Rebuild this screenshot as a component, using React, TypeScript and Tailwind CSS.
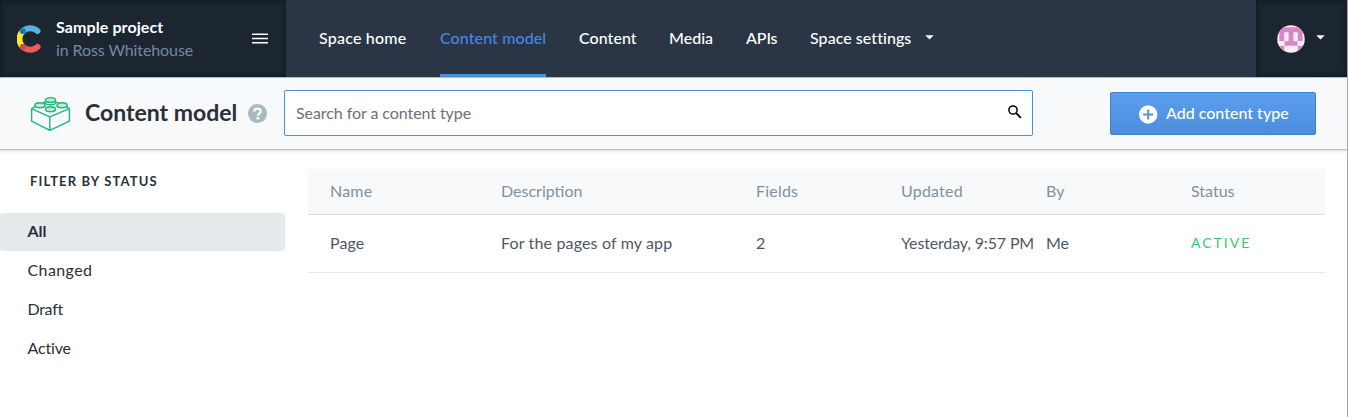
import React from "react";

const navItems = [
  { label: "Space home", width: "w-[88px]", spacing: "tracking-[0.22px]" },
  { label: "Content model", width: "w-[106px]", spacing: "tracking-[0.1px]", active: true },
  { label: "Content", width: "w-[57px]", spacing: "tracking-[0.05px]" },
  { label: "Media", width: "w-[44px]", spacing: "tracking-normal" },
  { label: "APIs", width: "w-[31px]", spacing: "tracking-[-0.1px]" },
  { label: "Space settings", width: "w-[102px]", spacing: "tracking-[0.05px]" },
];

const filters = [
  { label: "All", spacing: "tracking-normal" },
  { label: "Changed", spacing: "tracking-[0.4px]" },
  { label: "Draft", spacing: "tracking-[-0.3px]" },
  { label: "Active", spacing: "tracking-[-0.15px]" },
];

function Caret() {
  return (
    <svg width="9" height="5" viewBox="0 0 9 5" className="block shrink-0">
      <path d="M0.3 0.3h8.4L4.5 4.4z" fill="#fff" />
    </svg>
  );
}

function Logo() {
  return (
    <svg width="24" height="28" viewBox="0 0 24 28" fill="none" strokeWidth="5.8" strokeLinecap="round" className="shrink-0">
      <path d="M5.8 6.1A11 11 0 0 0 5.8 21.9" stroke="#fde432" />
      <path d="M5.8 6.1A11 11 0 0 1 20.6 6.1" stroke="#56b3e2" />
      <path d="M5.8 21.9A11 11 0 0 0 20.6 21.9" stroke="#ee5a5a" />
      <circle cx="5.8" cy="6.1" r="2.9" fill="#1279b3" />
      <circle cx="5.8" cy="21.9" r="2.9" fill="#ca4a36" />
    </svg>
  );
}

function Avatar() {
  return (
    <svg width="28" height="28" viewBox="0 0 28 28" className="shrink-0">
      <defs>
        <clipPath id="round">
          <circle cx="14" cy="14" r="13.7" />
        </clipPath>
      </defs>
      <g clipPath="url(#round)">
        <rect width="28" height="28" fill="#f0f0f0" />
        <path
          fill="#dc85c6"
          d="M2.3 2.3h23.4v14H20.7v4.4H25.7V28H20.7V20.7H7.3V28H2.3V20.7H7.3v-4.4H2.3z"
        />
        <path fill="#f0f0f0" d="M7.2 7.2h4.4v9H7.2zM16.4 7.2h4.4v9h-4.4z" />
        <path fill="#f0f0f0" d="M0 16.3h7.3v4.4H0zM20.7 16.3H28v4.4h-7.3z" />
      </g>
    </svg>
  );
}

function Brick() {
  return (
    <svg width="42" height="36" viewBox="0 0 42 36" fill="none" stroke="#20b77f" strokeWidth="1.4" strokeLinejoin="round" className="shrink-0">
      <path d="M1.6 12.6L19.8 20.8 39.4 12.6V25.2L19.8 34.3 1.6 25.2zM19.8 20.8v13.5" />
      <path d="M1.6 12.6l3.6-2M15 6.2l-2 .8M26 6.2l2.6 1.1M36.6 10.9l2.8 1.7" />
      <g fill="#b9ecd0">
        <path d="M15.5 4v2.6c0 1.4 2.3 2.2 5 2.2s5-.8 5-2.2V4" fill="#f7f9fa" />
        <ellipse cx="20.5" cy="4" rx="5" ry="2.4" />
        <path d="M4.9 9.2v1.4M15 9.2v1.4M27 9.2v1.4M37.1 9.2v1.4" />
        <ellipse cx="9.9" cy="9.2" rx="5" ry="2.5" />
        <ellipse cx="32.1" cy="9.2" rx="5" ry="2.5" />
        <ellipse cx="20.5" cy="13.3" rx="5" ry="2.5" />
      </g>
    </svg>
  );
}

export default function App() {
  return (
    <div className="h-[417px] w-[1348px] overflow-hidden border-r border-[#a3a6a8] bg-white font-['Lato',sans-serif] text-[16px] text-[#2a3039]">
      <header className="flex h-[78px] border-b border-[#b4c3ca] bg-[#2a3645] text-white">
        <div className="flex w-[286px] shrink-0 items-center bg-[#1b2631] pl-[17px] pr-[18px] shadow-[inset_0_0_5px_#0d141b]">
          <Logo />
          <div className="ml-[15px] flex-1 pb-[2px] leading-[23px]">
            <div className="font-bold tracking-[0.1px]">Sample project</div>
            <div className="tracking-[-0.1px] text-[#7688a6]">in Ross Whitehouse</div>
          </div>
          <svg width="16" height="11" viewBox="0 0 16 11" className="block">
            <path d="M0 1.2h16M0 5.5h16M0 9.8h16" stroke="#fff" strokeWidth="1.4" />
          </svg>
        </div>
        <nav className="flex flex-1 gap-[33px] pl-[33px]">
          {navItems.map((n) => (
            <a
              key={n.label}
              className={`flex items-center whitespace-nowrap border-b-[3px] pt-px font-medium ${n.width} ${n.spacing} ${
                n.active ? "border-b-[#4a90e2] text-[#4586e4]" : "border-b-transparent text-white"
              }`}
            >
              {n.label}
            </a>
          ))}
          <div className="-ml-[20px] flex items-center pb-[3px]">
            <Caret />
          </div>
        </nav>
        <div className="flex w-[91px] shrink-0 items-center gap-[11px] bg-[#1b2631] pl-[21px] shadow-[inset_0_0_5px_#0d141b]">
          <Avatar />
          <div className="pb-[3px]">
            <Caret />
          </div>
        </div>
      </header>

      <section className="flex h-[72px] items-center border-b border-[#b4c3ca] bg-[#f7f9fa] pl-[30px] pr-[31px] shadow-[0_1px_3px_rgba(0,0,0,0.16)]">
        <Brick />
        <h1 className="ml-[13px] w-[153px] whitespace-nowrap pb-[3px] text-[23px] font-bold leading-[28px]">Content model</h1>
        <svg width="19" height="19" viewBox="0 0 19 19" className="ml-[10px] shrink-0">
          <circle cx="9.5" cy="9.5" r="9.5" fill="#a9b9c0" />
          <path d="M6.3 7.6C6.3 5.7 7.7 4.6 9.5 4.6s3.2 1 3.2 2.7c0 2-2.8 2.2-2.8 4.5" fill="none" stroke="#fff" strokeWidth="2.4" />
          <rect x="8.5" y="13" width="2.7" height="2.5" fill="#fff" />
        </svg>
        <div className="mb-[2px] ml-[17px] flex h-[46px] w-[749px] items-center rounded-[2px] border border-[#4a90e2] bg-white pl-[11px] pr-[9px] text-[#6c7175]">
          <span className="flex-1 tracking-[-0.07px]">Search for a content type</span>
          <svg width="16" height="16" viewBox="0 0 16 16" fill="none" stroke="#000" className="mb-px block">
            <circle cx="6" cy="6" r="4.1" strokeWidth="1.5" />
            <path d="M9 9l4.8 4.8" strokeWidth="1.9" />
          </svg>
        </div>
        <button className="ml-auto flex h-[43px] w-[206px] items-center rounded-[2px] border border-[#3c80cf] bg-linear-to-b from-[#5b9eed] to-[#4a8edd] pl-[28px] font-medium text-white">
          <svg width="19" height="19" viewBox="0 0 19 19" className="mt-[2px] shrink-0">
            <circle cx="9.2" cy="9.5" r="9.2" fill="#fff" />
            <path d="M4.2 9.5h10M9.2 4.5v10" stroke="#4f93e2" strokeWidth="2" />
          </svg>
          <span className="ml-[8px] whitespace-nowrap pb-[2px]">Add content type</span>
        </button>
      </section>

      <div className="flex">
        <aside className="w-[285px] shrink-0">
          <h2 className="pl-[30px] pt-[22px] text-[13px] font-bold leading-[18px] tracking-[1.13px]">FILTER BY STATUS</h2>
          <ul className="mt-[23px] flex flex-col gap-px">
            {filters.map((f) => (
              <li
                key={f.label}
                className={`flex h-[38px] items-center rounded-[3px] pb-[2px] pl-[27.5px] ${f.spacing} ${f.label === "All" ? "bg-[#e5eaed] font-bold" : ""}`}
              >
                {f.label}
              </li>
            ))}
          </ul>
        </aside>
        <main className="ml-[23px] w-[1017px] pt-[19px]">
          <div className="grid h-[46px] grid-cols-[171px_255px_145px_145px_145px_1fr] items-center border-b border-[#d3dce0] bg-[#f7f9fa] pb-[2px] pl-[22px] text-[#8091a1]">
            <span className="tracking-[0.2px]">Name</span>
            <span>Description</span>
            <span className="tracking-[0.2px]">Fields</span>
            <span className="tracking-[0.2px]">Updated</span>
            <span>By</span>
            <span>Status</span>
          </div>
          <div className="grid h-[58px] grid-cols-[171px_255px_145px_145px_145px_1fr] items-center whitespace-nowrap border-b border-[#e5ebed] pb-[2px] pl-[22px] text-[#4f5766]">
            <span className="tracking-[0.1px]">Page</span>
            <span className="tracking-[0.15px]">For the pages of my app</span>
            <span>2</span>
            <span className="tracking-[-0.15px]">Yesterday, 9:57 PM</span>
            <span>Me</span>
            <span className="text-[14px] tracking-[2px] text-[#3fc46c]">ACTIVE</span>
          </div>
        </main>
      </div>
    </div>
  );
}
